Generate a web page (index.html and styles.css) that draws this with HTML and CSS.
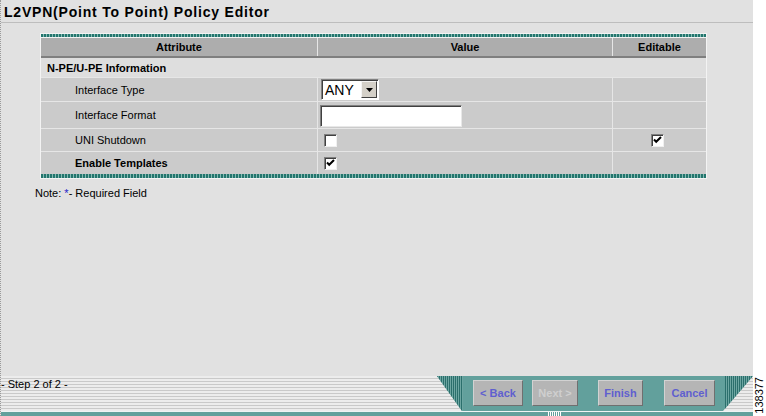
FILE: index.html
```html
<!DOCTYPE html>
<html lang="en">
<head>
    <meta charset="UTF-8">
    <meta name="viewport" content="width=device-width, initial-scale=1.0">
    <title>L2VPN Policy Editor</title>
    <link rel="stylesheet" href="styles.css">
</head>
<body>
<div class="screen">

    <div class="main">

        <div class="titulo">L2VPN(Point To Point) Policy Editor</div>

        <div class="contenido">

            <div class="caja_tabla">
                <div class="franja"></div>

                <div class="fila cabecera">
                    <div class="celda centro">Attribute</div>
                    <div class="celda centro">Value</div>
                    <div class="celda centro">Editable</div>
                </div>

                <div class="fila seccion">
                    <div class="celda etiqueta_seccion">N-PE/U-PE Information</div>
                    <div class="celda"></div>
                    <div class="celda"></div>
                </div>

                <div class="fila dato alto24">
                    <div class="celda etiqueta">Interface Type</div>
                    <div class="celda valor">
                        <div class="selector">
                            <span class="selector_txt">ANY</span>
                            <span class="selector_btn">
                                <svg width="7" height="4" viewBox="0 0 7 4"><path d="M0 0h7L3.5 4z" fill="#000"/></svg>
                            </span>
                        </div>
                    </div>
                    <div class="celda"></div>
                </div>

                <div class="fila dato alto27">
                    <div class="celda etiqueta">Interface Format</div>
                    <div class="celda valor"><div class="campo"></div></div>
                    <div class="celda"></div>
                </div>

                <div class="fila dato">
                    <div class="celda etiqueta">UNI Shutdown</div>
                    <div class="celda valor"><span class="check"></span></div>
                    <div class="celda centro"><span class="check marcado">
                        <svg width="9" height="8" viewBox="0 0 9 8"><path d="M1 3.5l2.2 2.3L8 1" stroke="#000" stroke-width="2" fill="none"/></svg>
                    </span></div>
                </div>

                <div class="fila dato">
                    <div class="celda etiqueta negrita">Enable Templates</div>
                    <div class="celda valor"><span class="check marcado">
                        <svg width="9" height="8" viewBox="0 0 9 8"><path d="M1 3.5l2.2 2.3L8 1" stroke="#000" stroke-width="2" fill="none"/></svg>
                    </span></div>
                    <div class="celda"></div>
                </div>

                <div class="franja abajo"></div>
            </div>

            <div class="nota">Note: <span class="asterisco">*</span>- Required Field</div>

        </div>

        <div class="pie">
            <div class="pie_rayas">
                <div class="paso">- Step 2 of 2 -</div>
                <div class="botonera">
                    <button class="boton b_back">&lt; Back</button>
                    <button class="boton b_next" disabled>Next &gt;</button>
                    <button class="boton b_finish">Finish</button>
                    <button class="boton b_cancel">Cancel</button>
                </div>
            </div>
            <div class="pie_base"><span class="muesca"></span></div>
        </div>

    </div>

    <div class="lateral"><span class="numero">138377</span></div>

</div>
</body>
</html>
```

FILE: styles.css
```css
* {
    box-sizing: border-box;
}
body {
    margin: 0;
    font-family: "Liberation Sans", Arial, sans-serif;
    font-size: 11px;
    color: #000;
    background: #fff;
}
.screen {
    display: flex;
    width: 766px;
    height: 416px;
    overflow: hidden;
}
.main {
    width: 753px;
    display: flex;
    flex-direction: column;
    background: #e1e1e1;
    border-left: 1px dotted #9a9a9a;
}
.titulo {
    height: 23px;
    padding: 4px 0 0 3px;
    font-size: 14px;
    font-weight: bold;
    letter-spacing: 0.8px;
    border-bottom: 1px solid #bdbdbd;
}
.contenido {
    flex: 1;
    padding-top: 10px;
}

/* tabla */
.caja_tabla {
    margin-left: 39px;
    width: 667px;
    padding: 1px;
    background: #f3f3f3;
}
.franja {
    height: 3px;
    background: repeating-linear-gradient(90deg, #23756d 0 2px, #86bab3 2px 3px);
    margin-bottom: 1px;
}
.franja.abajo {
    height: 4px;
    margin-bottom: 0;
}
.fila {
    display: grid;
    grid-template-columns: 276px 295px 94px;
}
.celda {
    display: flex;
    align-items: center;
}
.celda + .celda {
    border-left: 1px solid #e6e6e6;
}
.centro {
    justify-content: center;
}
.cabecera {
    height: 20px;
    background: #adadad;
    border-bottom: 2px solid #7f7f7f;
    font-weight: bold;
}
.seccion {
    height: 19px;
    background: #dedede;
}
.seccion .celda + .celda {
    border-left-color: #dedede;
}
.etiqueta_seccion {
    padding-left: 6px;
    font-weight: bold;
}
.dato {
    height: 23px;
    background: #cbcbcb;
    border-top: 1px solid #e6e6e6;
}
.alto24 { height: 24px; }
.alto27 { height: 27px; }
.etiqueta {
    padding-left: 34px;
}
.negrita {
    font-weight: bold;
}
.valor {
    padding-left: 2px;
}

/* controles */
.selector {
    display: flex;
    align-items: center;
    width: 58px;
    height: 21px;
    margin-left: 1px;
    background: #fff;
    border: 1px solid;
    border-color: #808080 #fff #fff #808080;
    box-shadow: inset 1px 1px 0 #404040;
}
.selector_txt {
    flex: 1;
    padding-left: 3px;
    font-size: 14px;
}
.selector_btn {
    display: flex;
    align-items: center;
    justify-content: center;
    width: 16px;
    height: 17px;
    margin-right: 1px;
    background: #d4d0c8;
    border: 1px solid;
    border-color: #f4f4f4 #404040 #404040 #f4f4f4;
}
.campo {
    width: 142px;
    height: 22px;
    margin-top: 1px;
    background: #fff;
    border: 1px solid;
    border-color: #808080 #e8e8e8 #e8e8e8 #808080;
    box-shadow: inset 1px 1px 0 #404040;
}
.check {
    display: flex;
    align-items: center;
    justify-content: center;
    width: 13px;
    height: 13px;
    margin-left: 4px;
    background: #fff;
    border: 1px solid;
    border-color: #808080 #f0f0f0 #f0f0f0 #808080;
    box-shadow: inset 1px 1px 0 #404040;
}
.centro .check {
    margin-left: 0;
    margin-right: 4px;
}
.nota {
    margin: 8px 0 0 34px;
}
.asterisco {
    color: #1f22c8;
}

/* pie */
.pie {
    height: 40px;
    display: flex;
    flex-direction: column;
}
.pie_rayas {
    height: 35px;
    display: flex;
    background: repeating-linear-gradient(180deg, #ececec 0 2px, #c9c9c9 2px 3px);
}
.paso {
    padding-top: 2px;
    font-size: 11px;
}
.botonera {
    margin-left: auto;
    width: 316px;
    display: flex;
    align-items: flex-start;
    padding: 4px 0 0 36px;
    background:
        repeating-linear-gradient(90deg, #2b6f6c 0 1px, #6da6a2 1px 2px) left top / 26px 100% no-repeat,
        repeating-linear-gradient(90deg, #2b6f6c 0 1px, #6da6a2 1px 2px) right top / 28px 100% no-repeat,
        #62a09c;
    clip-path: polygon(0 0, 100% 0, calc(100% - 30px) 100%, 25px 100%);
}
.boton {
    height: 26px;
    padding: 0;
    font-family: "Liberation Sans", Arial, sans-serif;
    font-size: 11px;
    font-weight: bold;
    color: #5f5fcf;
    background: #b5b5b5;
    border: 1px solid;
    border-color: #d2d2d2 #6f6f6f #6f6f6f #d2d2d2;
}
.b_back { width: 50px; }
.b_next { width: 46px; margin-left: 9px; color: #cfcfcf; }
.b_finish { width: 45px; margin-left: 20px; }
.b_cancel { width: 51px; margin-left: 21px; }
.pie_base {
    flex: 1;
    background: #62a09c;
    border-top: 1px solid #eef4f4;
    position: relative;
}
.muesca {
    position: absolute;
    left: 547px;
    top: 0;
    width: 13px;
    height: 4px;
    background: repeating-linear-gradient(90deg, #fff 0 1px, #62a09c 1px 2px);
}

/* franja lateral */
.lateral {
    flex: 1;
    background: #fff;
    display: flex;
    flex-direction: column;
    justify-content: flex-end;
    align-items: center;
    padding-bottom: 2px;
}
.numero {
    writing-mode: vertical-rl;
    transform: rotate(180deg);
    font-size: 11px;
    line-height: 11px;
}
```
